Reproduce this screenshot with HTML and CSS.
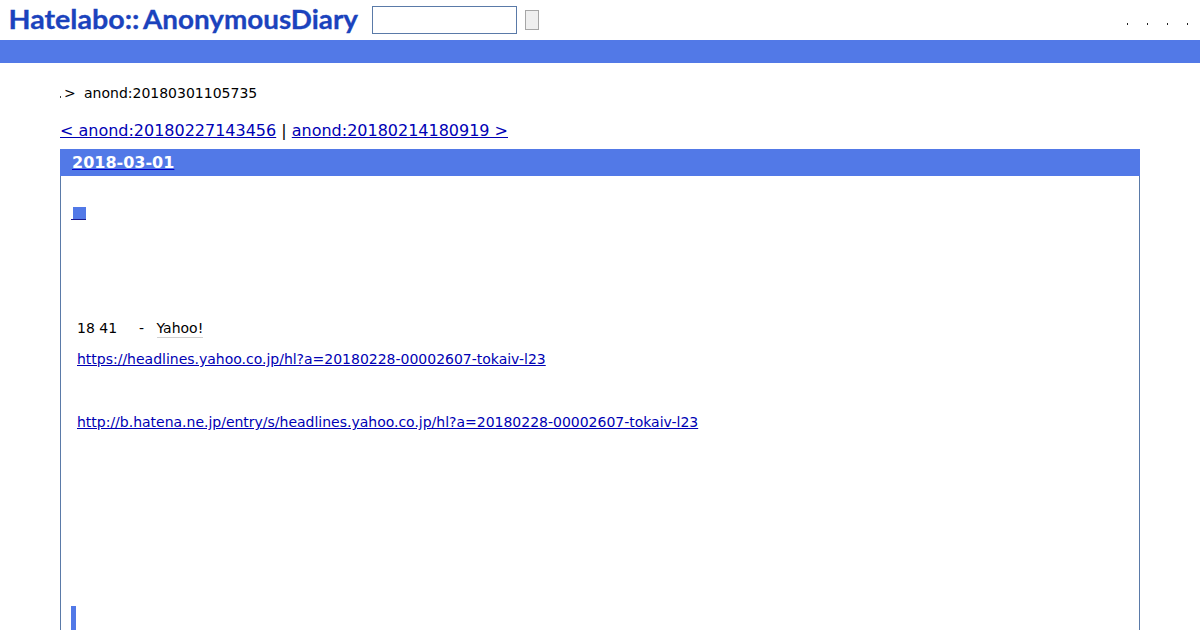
FILE: index.html
```
<!DOCTYPE html>
<html lang="ja">
<head>
    <meta charset="UTF-8">
    <meta name="viewport" content="width=device-width, initial-scale=1.0">
    <title>anond:20180301105735</title>
    <link rel="stylesheet" href="styles.css">
</head>
<body>
    <header class="header">
        <h1 class="logo">
            <svg width="360" height="40" viewBox="0 0 360 40">
                <text x="8.5" y="28.5" textLength="131" lengthAdjust="spacingAndGlyphs">Hatelabo::</text>
                <text x="143" y="28.5" textLength="215" lengthAdjust="spacingAndGlyphs">AnonymousDiary</text>
            </svg>
        </h1>
        <form class="search">
            <input type="text" class="search-word" name="word">
            <button type="button" class="search-button"></button>
        </form>
        <ul class="menu">
            <li></li>
            <li></li>
            <li></li>
            <li></li>
        </ul>
    </header>
    <div class="bar"></div>
    <main class="main">
        <div class="breadcrumb"><span class="dot"></span><span class="arrow">&gt;</span><span>anond:20180301105735</span></div>
        <div class="pager"><a href="#">&lt; anond:20180227143456</a> | <a href="#">anond:20180214180919 &gt;</a></div>
        <div class="day">
            <h2><a href="#">2018-03-01</a></h2>
            <div class="body">
                <h3><a href="#"><span class="mark"></span></a></h3>
                <div class="section">
                    <p class="source"><span class="number">18 41</span><span class="dash">-</span><a class="keyword" href="#">Yahoo!</a></p>
                    <p class="first-link"><a href="#">https://headlines.yahoo.co.jp/hl?a=20180228-00002607-tokaiv-l23</a></p>
                    <p class="second-link"><a href="#">http://b.hatena.ne.jp/entry/s/headlines.yahoo.co.jp/hl?a=20180228-00002607-tokaiv-l23</a></p>
                </div>
                <div class="response"></div>
            </div>
        </div>
    </main>
</body>
</html>
```
FILE: styles.css
```
* {
    box-sizing: border-box;
}
body {
    margin: 0;
    height: 630px;
    overflow: hidden;
    background: #fff;
    color: #000;
    font-family: "DejaVu Sans", sans-serif;
    font-size: 14px;
}
h1, h2, h3, p, ul {
    margin: 0;
    padding: 0;
}
a {
    color: #0000b4;
}
.header {
    display: flex;
    align-items: center;
    height: 40px;
}
.logo {
    width: 372px;
    height: 40px;
}
.logo svg {
    display: block;
}
.logo text {
    font-family: Lato, sans-serif;
    font-size: 26px;
    font-weight: 700;
    fill: #1b43bd;
    stroke: #1b43bd;
    stroke-width: 0.3;
}
.search {
    display: flex;
    align-items: center;
    gap: 8px;
}
.search-word {
    width: 145px;
    height: 28px;
    border: 1px solid #5a7aa8;
    background: #fff;
}
.search-button {
    width: 14px;
    height: 20px;
    padding: 0;
    border: 1px solid #a6a6a6;
    background: #efefef;
}
.menu {
    display: flex;
    gap: 19px;
    margin-left: auto;
    padding: 8px 12px 0 0;
    list-style: none;
}
.menu li {
    width: 1px;
    height: 2px;
    background: #222;
}
.bar {
    height: 23px;
    background: #5279e7;
}
.main {
    padding: 0 60px;
}
.breadcrumb {
    display: flex;
    align-items: baseline;
    padding-top: 22px;
    line-height: 16px;
}
.dot {
    width: 1px;
    height: 2px;
    background: #444;
}
.arrow {
    width: 20px;
    margin-left: 3px;
}
.pager {
    padding-top: 20px;
    font-size: 16px;
    line-height: 19px;
    letter-spacing: -0.01px;
}
.day {
    height: 500px;
    margin-top: 9px;
    border: 1px solid #5a7aa8;
    border-top: 0;
}
.day h2 {
    height: 27px;
    margin: 0 -1px;
    padding-left: 12px;
    background: #5279e7;
    font-size: 16px;
    line-height: 27px;
}
.day h2 a {
    color: #fff;
    text-decoration-color: #0000c8;
}
.body {
    padding: 31px 10px 0;
}
.day h3 {
    height: 13px;
}
.day h3 a {
    display: block;
    width: 15px;
    height: 13px;
    border-bottom: 1px solid #1a1a8c;
}
.mark {
    display: block;
    width: 13px;
    height: 12px;
    margin-left: 2px;
    background: #5279e7;
}
.section {
    padding: 98px 6px 0;
}
.section p {
    line-height: 20px;
    letter-spacing: -0.01px;
}
.source {
    display: flex;
    align-items: flex-start;
}
.number {
    width: 62px;
}
.dash {
    width: 17.5px;
}
.section .keyword {
    height: 20px;
    color: #000;
    text-decoration: none;
    border-bottom: 1px solid #d0d0d0;
}
.section .first-link {
    margin-top: 11px;
}
.section .second-link {
    margin-top: 43px;
}
.response {
    width: 5px;
    height: 40px;
    margin-top: 174px;
    background: #5279e7;
}
```
